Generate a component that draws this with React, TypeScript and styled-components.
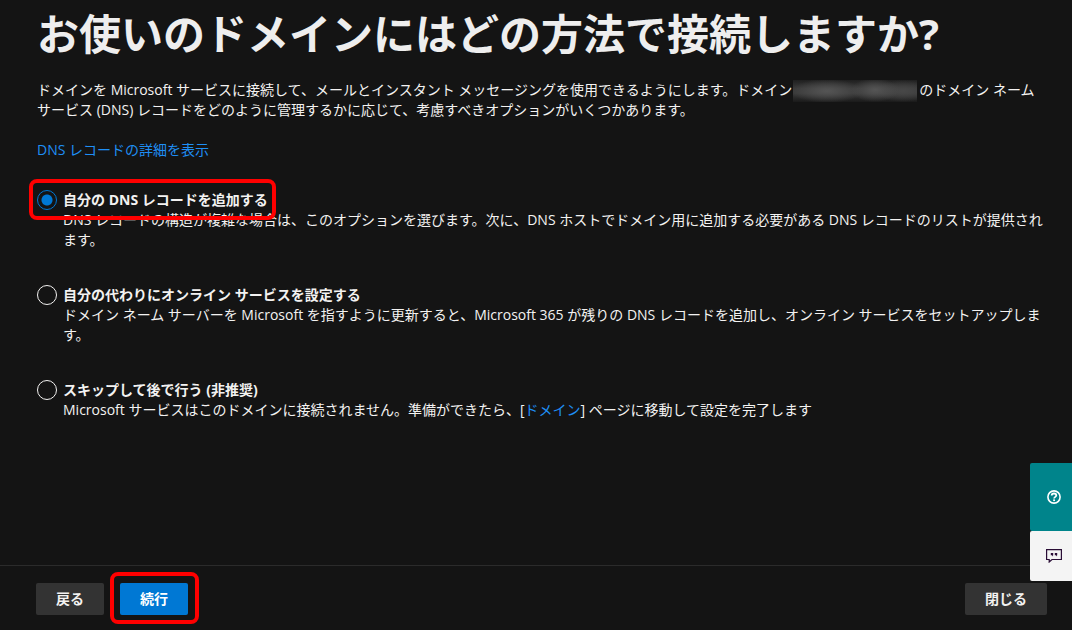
import React, { useState } from "react";
import styled, { createGlobalStyle, css } from "styled-components";

const GlobalStyle = createGlobalStyle`
  *, *::before, *::after { box-sizing: border-box; }
  body {
    margin: 0;
    background: #141414;
    color: #f3f2f1;
    font-family: "Open Sans", "Noto Sans CJK JP", sans-serif;
    font-size: 14px;
    line-height: 20px;
  }
`;

const Page = styled.div`
  display: flex;
  flex-direction: column;
  min-height: 100vh;
`;

const Content = styled.main`
  flex: 1;
  padding: 6px 25px 24px 37px;
`;

const Title = styled.h1`
  margin: 0 0 18px;
  font-size: 42px;
  line-height: 56px;
  font-weight: 700;
  color: #eeeeee;
`;

const Intro = styled.p`
  margin: 0 0 20px;
`;

const Redacted = styled.span`
  display: inline-block;
  width: 124px;
  height: 22px;
  margin: 0 2px -2px 1px;
  vertical-align: top;
  background:
    radial-gradient(ellipse 36px 12px at 34px 11px, #555555, transparent),
    radial-gradient(ellipse 24px 12px at 82px 10px, #555555, transparent),
    radial-gradient(ellipse 28px 11px at 110px 11px, #484848, transparent),
    linear-gradient(#1f1f1f, #3a3a3a 40%, #3a3a3a 60%, #1a1a1a);
`;

const Link = styled.a`
  color: #1f8ff5;
  text-decoration: none;
`;

const Options = styled.fieldset`
  display: flex;
  flex-direction: column;
  gap: 35px;
  margin: 30px 0 0;
  padding: 0;
  border: 0;
`;

const Option = styled.div`
  display: grid;
  grid-template-columns: 20px 1fr;
  column-gap: 6px;
`;

const Radio = styled.input`
  appearance: none;
  width: 20px;
  height: 20px;
  margin: 0;
  border: 1px solid #f3f2f1;
  border-radius: 50%;

  &:checked {
    border-color: #0078d4;
    background: radial-gradient(circle, #0078d4 5px, transparent 6px);
  }
`;

const marker = css`
  &::after {
    content: "";
    position: absolute;
    border: 4px solid #ff0000;
    border-radius: 8px;
    pointer-events: none;
  }
`;

const OptionLabel = styled.label<{ $marked?: boolean }>`
  position: relative;
  justify-self: start;
  font-weight: 700;

  ${({ $marked }) => $marked && css`
    ${marker}
    &::after { inset: -11px -8px -10px -34px; }
  `}
`;

const Description = styled.p`
  grid-column: 2;
  margin: 0;
`;

const Footer = styled.footer`
  display: flex;
  align-items: flex-start;
  gap: 16px;
  padding: 17px 25px 15px 36px;
  border-top: 1px solid #2b2b2b;
`;

const Button = styled.button<{ $primary?: boolean }>`
  height: 32px;
  padding: 0 20px;
  border: 0;
  border-radius: 2px;
  background: ${({ $primary }) => ($primary ? "#0078d4" : "#333333")};
  color: ${({ $primary }) => ($primary ? "#ffffff" : "#f3f2f1")};
  font: inherit;
  font-weight: 700;
`;

const MarkedAction = styled.div`
  position: relative;
  ${marker}
  &::after { inset: -11px -11px -9px -10px; }
`;

const CloseButton = styled(Button)`
  margin-left: auto;
`;

const SideTabs = styled.aside`
  position: fixed;
  right: 0;
  bottom: 49px;
  display: flex;
  flex-direction: column;
`;

const SideTab = styled.button<{ $kind: "help" | "feedback" }>`
  display: flex;
  align-items: center;
  justify-content: center;
  width: 42px;
  height: ${({ $kind }) => ($kind === "help" ? "68px" : "50px")};
  padding: 0 0 0 5px;
  border: 0;
  border-radius: 2px 0 0 2px;
  background: ${({ $kind }) => ($kind === "help" ? "#00848b" : "#f4f4f4")};
`;

const HelpIcon = () => (
  <svg width="14" height="14" viewBox="0 0 14 14" fill="none" stroke="#fff">
    <circle cx="7" cy="7" r="6.1" strokeWidth="1.6" />
    <path d="M4.7 5.6C4.7 4.1 5.7 3.5 7 3.5s2.3.7 2.3 2C9.3 6.9 7.1 6.9 7.1 8.6" strokeWidth="1.8" />
    <path d="M7.1 9.4v1.7" strokeWidth="1.9" />
  </svg>
);

const FeedbackIcon = () => (
  <svg width="16" height="14" viewBox="0 0 16 14" fill="none" stroke="#2a0d36">
    <path d="M.6.6h14.8v9.9H6L3.2 13V10.5H.6z" strokeWidth="1.2" />
    <path d="M4.8 4h2.4v2.3L6.2 7.4V6.2H4.8zM8.8 4h2.4v2.3l-1 1.1V6.2H8.8z" fill="#2a0d36" stroke="none" />
  </svg>
);

type Choice = {
  id: string;
  title: string;
  body: React.ReactNode;
};

const choices: Choice[] = [
  {
    id: "own",
    title: "自分の DNS レコードを追加する",
    body: "DNS レコードの構造が複雑な場合は、このオプションを選びます。次に、DNS ホストでドメイン用に追加する必要がある DNS レコードのリストが提供されます。",
  },
  {
    id: "auto",
    title: "自分の代わりにオンライン サービスを設定する",
    body: "ドメイン ネーム サーバーを Microsoft を指すように更新すると、Microsoft 365 が残りの DNS レコードを追加し、オンライン サービスをセットアップします。",
  },
  {
    id: "skip",
    title: "スキップして後で行う (非推奨)",
    body: (
      <>
        Microsoft サービスはこのドメインに接続されません。準備ができたら、[<Link href="#domains">ドメイン</Link>] ページに移動して設定を完了します
      </>
    ),
  },
];

export default function App() {
  const [selected, setSelected] = useState("own");

  return (
    <Page lang="ja">
      <GlobalStyle />
      <Content>
        <Title>お使いのドメインにはどの方法で接続しますか?</Title>
        <Intro>
          ドメインを Microsoft サービスに接続して、メールとインスタント メッセージングを使用できるようにします。ドメイン
          <Redacted />
          のドメイン ネーム サービス (DNS) レコードをどのように管理するかに応じて、考慮すべきオプションがいくつかあります。
        </Intro>
        <Link href="#dns">DNS レコードの詳細を表示</Link>
        <Options aria-label="接続方法">
          {choices.map(({ id, title, body }) => (
            <Option key={id}>
              <Radio
                type="radio"
                name="method"
                id={id}
                checked={selected === id}
                onChange={() => setSelected(id)}
              />
              <OptionLabel htmlFor={id} $marked={id === "own"}>{title}</OptionLabel>
              <Description>{body}</Description>
            </Option>
          ))}
        </Options>
      </Content>
      <Footer>
        <Button type="button">戻る</Button>
        <MarkedAction>
          <Button type="button" $primary>続行</Button>
        </MarkedAction>
        <CloseButton type="button">閉じる</CloseButton>
      </Footer>
      <SideTabs>
        <SideTab type="button" $kind="help" aria-label="ヘルプ"><HelpIcon /></SideTab>
        <SideTab type="button" $kind="feedback" aria-label="フィードバック"><FeedbackIcon /></SideTab>
      </SideTabs>
    </Page>
  );
}
